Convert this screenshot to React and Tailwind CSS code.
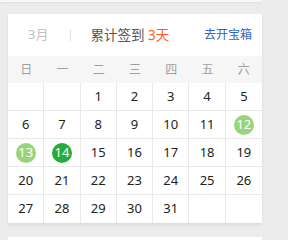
const weekdays = ["日", "一", "二", "三", "四", "五", "六"];

function buildDays() {
  const cells = [null, null];
  for (let d = 1; d <= 31; d++) cells.push(d);
  while (cells.length < 35) cells.push(null);
  return cells;
}

function DayCell({ day, index }) {
  const lastCol = index % 7 === 6;
  const lastRow = index >= 28;
  let badge = "";
  if (day === 12 || day === 13) badge = "bg-[#97d57c] text-white";
  if (day === 14) badge = "bg-[#25ad3b] text-white";
  return (
    <div
      className={`h-[28px] flex items-center justify-center border-[#e9e9e9] ${
        lastCol ? "" : "border-r"
      } ${lastRow ? "" : "border-b"}`}
    >
      {day && (
        <span
          className={`w-[20px] h-[20px] rounded-full flex items-center justify-center text-[13px] ${
            badge || "text-[#222]"
          }`}
        >
          {day}
        </span>
      )}
    </div>
  );
}

export default function App() {
  const days = buildDays();
  return (
    <div
      className="w-[288px] h-[240px] bg-[#ececec] overflow-hidden"
      style={{ fontFamily: '"Noto Sans", "Noto Sans CJK SC", sans-serif' }}
    >
      <div className="w-[262px] h-[2px] bg-[#f7f7f7] shadow-[0_1px_2px_rgba(0,0,0,0.06)]" />

      <div className="ml-[8px] mt-[12px] w-[254px] bg-white shadow-[0_2px_3px_rgba(0,0,0,0.07)]">
        {/* header */}
        <div className="h-[42px] flex items-center">
          <span className="ml-[20px] text-[13px] text-[#c2c2c2]">3月</span>
          <span className="ml-[22px] w-px h-[13px] bg-[#e2e2e2]" />
          <span className="ml-[19px] text-[13.5px] text-[#555]">
            累计签到 <span className="text-[#ff5a14]">3天</span>
          </span>
          <span className="ml-auto mr-[10px] text-[12px] text-[#2f63c9]">
            去开宝箱
          </span>
        </div>

        {/* week header */}
        <div className="grid grid-cols-7 h-[27px] bg-[#f6f6f6]">
          {weekdays.map((w) => (
            <div
              key={w}
              className="flex items-center justify-center text-[12px] text-[#a0a0a0]"
            >
              {w}
            </div>
          ))}
        </div>

        {/* days */}
        <div className="grid grid-cols-7">
          {days.map((d, i) => (
            <DayCell key={i} day={d} index={i} />
          ))}
        </div>
      </div>

      <div className="ml-[8px] mt-[14px] w-[254px] h-[10px] bg-white" />
    </div>
  );
}
